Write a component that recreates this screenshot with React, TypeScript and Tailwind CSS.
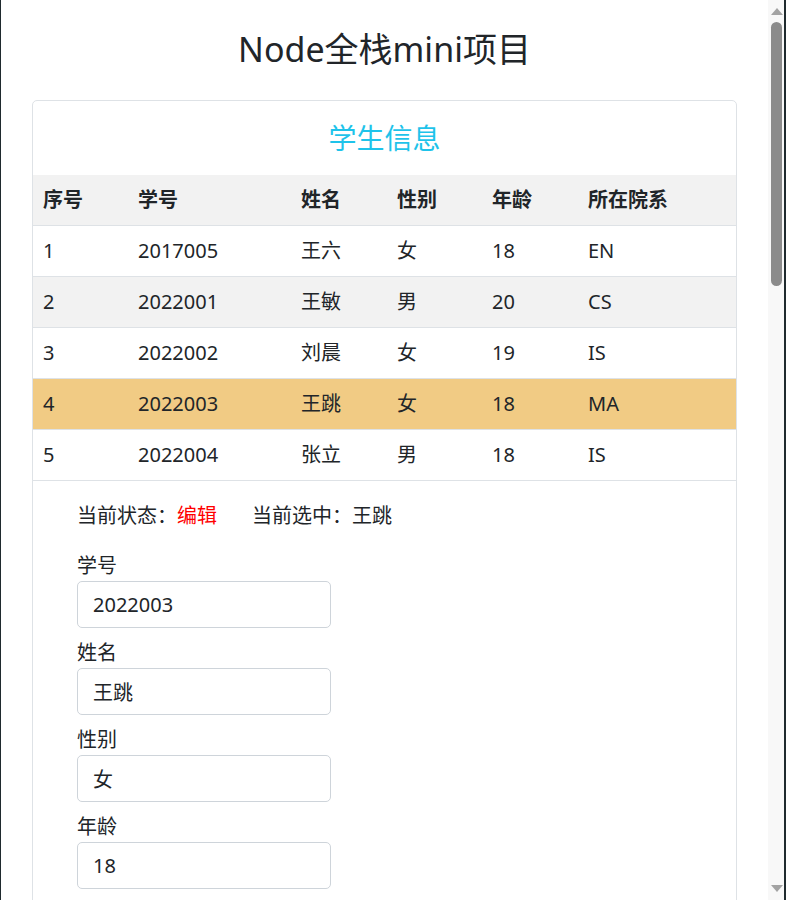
import React from "react";

const students = [
  { id: 1, no: "2017005", name: "王六", sex: "女", age: 18, dept: "EN" },
  { id: 2, no: "2022001", name: "王敏", sex: "男", age: 20, dept: "CS" },
  { id: 3, no: "2022002", name: "刘晨", sex: "女", age: 19, dept: "IS" },
  { id: 4, no: "2022003", name: "王跳", sex: "女", age: 18, dept: "MA" },
  { id: 5, no: "2022004", name: "张立", sex: "男", age: 18, dept: "IS" },
];

const selectedId = 4;

const fields = [
  { label: "学号", value: "2022003" },
  { label: "姓名", value: "王跳" },
  { label: "性别", value: "女" },
  { label: "年龄", value: "18" },
];

function Scrollbar() {
  return (
    <div className="w-[16px] shrink-0 bg-[#f8f8f8] flex flex-col items-center">
      <svg width="12" height="7" viewBox="0 0 12 7" className="mt-[8px] ml-[1px]">
        <polygon points="6,0 12,7 0,7" fill="#a3a3a3" />
      </svg>
      <div className="mt-[7px] ml-[1px] w-[11px] h-[264px] rounded-full bg-[#8b8b8b]" />
      <svg width="12" height="7" viewBox="0 0 12 7" className="mt-auto mb-[8px] ml-[1px]">
        <polygon points="0,0 12,0 6,7" fill="#a3a3a3" />
      </svg>
    </div>
  );
}

export default function App() {
  return (
    <div
      className="flex w-[786px] h-[900px] overflow-hidden bg-white text-[#212529]"
      style={{ fontFamily: '"Noto Sans", "Noto Sans CJK SC", sans-serif' }}
    >
      <div className="w-px shrink-0 bg-[#1f2a2e]" />

      <main className="flex-1 min-w-0 overflow-hidden">
        <h1 className="pt-[29px] text-center text-[34px] leading-[40px] font-normal">
          Node全栈mini项目
        </h1>

        <div className="mx-[31px] mt-[31px] border border-[#dee2e6] rounded-[5px] pb-[80px]">
          <div className="h-[74px] flex items-center justify-center text-[28px] text-[#1ec3ea]">
            学生信息
          </div>

          <table className="w-full table-fixed border-collapse text-[20px] leading-[30px]">
            <colgroup>
              <col className="w-[95px]" />
              <col className="w-[163px]" />
              <col className="w-[96px]" />
              <col className="w-[95px]" />
              <col className="w-[96px]" />
              <col />
            </colgroup>
            <thead>
              <tr className="bg-[#f2f2f2] border-b border-[#dee2e6]">
                {["序号", "学号", "姓名", "性别", "年龄", "所在院系"].map((h) => (
                  <th key={h} className="px-[10px] py-[10px] text-left font-bold">
                    {h}
                  </th>
                ))}
              </tr>
            </thead>
            <tbody>
              {students.map((s, i) => (
                <tr
                  key={s.id}
                  className={
                    s.id === selectedId
                      ? "bg-[#f1cb84] border-b border-[#dee2e6]"
                      : i % 2 === 1
                      ? "bg-[#f2f2f2] border-b border-[#dee2e6]"
                      : "bg-white border-b border-[#dee2e6]"
                  }
                >
                  <td className="px-[10px] py-[10px]">{s.id}</td>
                  <td className="px-[10px] py-[10px]">{s.no}</td>
                  <td className="px-[10px] py-[10px]">{s.name}</td>
                  <td className="px-[10px] py-[10px]">{s.sex}</td>
                  <td className="px-[10px] py-[10px]">{s.age}</td>
                  <td className="px-[10px] py-[10px]">{s.dept}</td>
                </tr>
              ))}
            </tbody>
          </table>

          <div className="px-[44px] pt-[20px] text-[20px] leading-[30px]">
            <div className="flex">
              <span className="w-[175px] shrink-0">
                当前状态：<span className="text-[#ff0000]">编辑</span>
              </span>
              <span>当前选中：王跳</span>
            </div>

            {fields.map((f, i) => (
              <div key={f.label} className={i === 0 ? "mt-[20px]" : "mt-[10px]"}>
                <label className="block">{f.label}</label>
                <input
                  readOnly
                  value={f.value}
                  className="block w-[254px] h-[47px] px-[15px] border border-[#ced4da] rounded-[5px] text-[20px] outline-none"
                />
              </div>
            ))}
          </div>
        </div>
      </main>

      <Scrollbar />
      <div className="w-[2px] shrink-0 bg-[#1f2a2e]" />
    </div>
  );
}
